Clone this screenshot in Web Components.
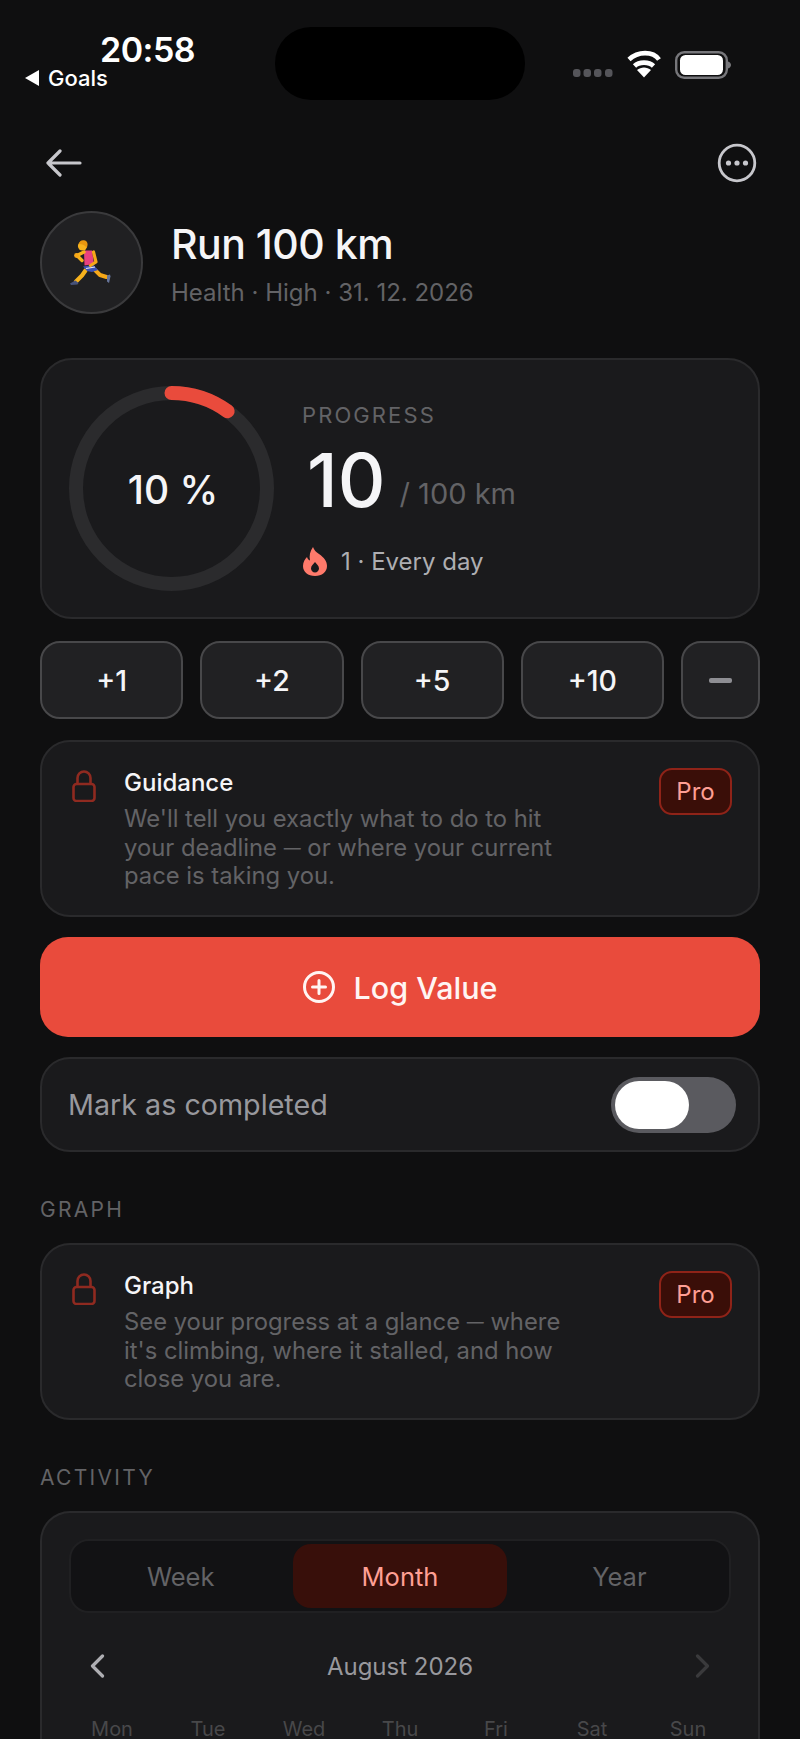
<!DOCTYPE html>
<html lang="en">
<head>
<meta charset="utf-8">
<title>Run 100 km</title>
<style>
html, body {
  margin: 0;
  padding: 0;
  width: 800px;
  height: 1739px;
  overflow: hidden;
  background: #0f0f10;
  color: #fff;
  font-family: Inter, "Liberation Sans", sans-serif;
}
main {
  display: flex;
  flex-direction: column;
  padding: 0 40px;
}
</style>
</head>
<body>
<status-bar></status-bar>
<main>
  <goal-header title="Run 100 km" meta="Health · High · 31. 12. 2026"></goal-header>
  <progress-card percent="10" value="10" target="/ 100 km" streak="1 · Every day"></progress-card>
  <quick-buttons></quick-buttons>
  <locked-card heading="Guidance">We'll tell you exactly what to do to hit<br>your deadline <span class="dash">—</span> or where your current<br>pace is taking you.</locked-card>
  <log-button>Log Value</log-button>
  <toggle-row>Mark as completed</toggle-row>
  <section-label style="margin-top:45px;margin-bottom:20px">GRAPH</section-label>
  <locked-card heading="Graph">See your progress at a glance <span class="dash">—</span> where<br>it's climbing, where it stalled, and how<br>close you are.</locked-card>
  <section-label style="margin-top:45px;margin-bottom:20px">ACTIVITY</section-label>
  <activity-card month="August 2026"></activity-card>
</main>

<script>
const statusTemplate = document.createElement('template');
statusTemplate.innerHTML = `
<style>
:host { display: grid; grid-template-columns: 275px 250px 1fr; height: 120px; color: #fff; }
.left { padding-top: 32px; }
.time { margin-left: 100px; font-size: 34px; line-height: 36px; font-weight: 600; letter-spacing: -0.5px; }
.back { display: flex; align-items: center; gap: 9px; margin-left: 25px; font-size: 22px; line-height: 20px; font-weight: 500; }
.island { margin-top: 27px; height: 73px; border-radius: 36px; background: #000; }
.icons { margin: 5px 0 0 48px; padding-top: 40px; }
svg { display: block; }
</style>
<div class="left">
  <div class="time">20:58</div>
  <div class="back">
    <svg width="14" height="16" viewBox="0 0 14 16"><path d="M14 0v16L0 8z" fill="#fff"/></svg>
    <span>Goals</span>
  </div>
</div>
<div class="island"></div>
<div class="icons">
  <svg width="160" height="40" viewBox="0 0 160 40">
    <g fill="#55555a">
      <rect x="0" y="24" width="7.5" height="8" rx="3"/>
      <rect x="10.5" y="24" width="7.5" height="8" rx="3"/>
      <rect x="21" y="24" width="7.5" height="8" rx="3"/>
      <rect x="32" y="24" width="7.5" height="8" rx="3"/>
    </g>
    <g fill="none" stroke="#fff" stroke-width="4.6">
      <path d="M56 14.5C65 6 80 6 86 14.5"/>
      <path d="M61.5 21C66 16.5 76 16.5 80.5 21"/>
    </g>
    <path d="M71 32.5l-7-7.5c4-3.4 10-3.4 14 0z" fill="#fff"/>
    <rect x="103.2" y="7.2" width="50.6" height="25.6" rx="8" fill="none" stroke="#77777b" stroke-width="2.4"/>
    <rect x="107" y="10" width="43" height="20" rx="5.5" fill="#fff"/>
    <path d="M155 16.5c2 .6 3 2 3 3.5s-1 2.9-3 3.5z" fill="#77777b"/>
  </svg>
</div>`;

class StatusBar extends HTMLElement {
  constructor() {
    super();
    this.attachShadow({ mode: 'open' });
    this.shadowRoot.appendChild(statusTemplate.content.cloneNode(true));
  }
}
customElements.define('status-bar', StatusBar);

const headerTemplate = document.createElement('template');
headerTemplate.innerHTML = `
<style>
:host { display: block; }
.nav { display: flex; justify-content: space-between; align-items: center; height: 86px; padding: 0 3px 0 6px; }
svg { display: block; }
.goal { display: flex; align-items: center; gap: 28px; margin-top: 5px; }
.avatar { box-sizing: border-box; width: 103px; height: 103px; border-radius: 50%; background: #202022; border: 2px solid #3a3a3c; display: flex; align-items: center; justify-content: center; }
.names { padding-top: 4px; }
h1 { margin: 0; font-size: 41px; line-height: 48px; font-weight: 500; letter-spacing: -0.5px; color: #f5f5f7; }
p { margin: 9px 0 0; font-size: 24px; line-height: 32px; color: #636366; }
</style>
<div class="nav">
  <svg width="36" height="28" viewBox="0 0 36 28" fill="none" stroke="#c7c7cc" stroke-width="3.2" stroke-linecap="round" stroke-linejoin="round">
    <path d="M34 14H2M14 2L2 14l12 12"/>
  </svg>
  <svg width="40" height="40" viewBox="0 0 40 40">
    <circle cx="20" cy="20" r="17.8" fill="none" stroke="#c7c7cc" stroke-width="2.8"/>
    <circle cx="11.5" cy="20" r="2.6" fill="#c7c7cc"/>
    <circle cx="20" cy="20" r="2.6" fill="#c7c7cc"/>
    <circle cx="28.5" cy="20" r="2.6" fill="#c7c7cc"/>
  </svg>
</div>
<div class="goal">
  <div class="avatar">
    <svg width="44" height="46" viewBox="0 0 44 46">
      <path d="M15.5 30.5L12 35.500l-6 6" fill="none" stroke="#f7b21d" stroke-width="4.2" stroke-linecap="round" stroke-linejoin="round"/>
      <path d="M25 30l5 5 6.500 2" fill="none" stroke="#f7a818" stroke-width="4" stroke-linecap="round" stroke-linejoin="round"/>
      <path d="M0 43.500L5.500 40.500l3 2.500-1 1.500-6.500 .5z" fill="#46527a"/>
      <path d="M37 35.500l3-1 .5 2-1.500 6.500-2-1.500z" fill="#66749a"/>
      <path d="M13 26.500l10.500-1.500 4.500 5-6 2-5-1z" fill="#3b51b5"/>
      <path d="M16 28.500l9-1.500" stroke="#e8e8f0" stroke-width="1.200"/>
      <path d="M14 10.500l8 0 2 13.500-9.500 1.500z" fill="#e8417f"/>
      <path d="M14 12l-7 3.500 5 5" fill="none" stroke="#f7b21d" stroke-width="3.400" stroke-linecap="round" stroke-linejoin="round"/>
      <circle cx="6.500" cy="15.500" r="2.400" fill="#f7a818"/>
      <path d="M23.500 12l2.500 10-5.500 3.500" fill="none" stroke="#f7a818" stroke-width="3.200" stroke-linecap="round" stroke-linejoin="round"/>
      <circle cx="12.500" cy="6" r="4.600" fill="#f7b21d"/>
      <path d="M9 4c0-3 3-4.500 6-3.500 2.500 1 3.500 4 1.500 7.500-1-2.500-4-4-7.500-4z" fill="#e8960f"/>
    </svg>
  </div>
  <div class="names">
    <h1></h1>
    <p></p>
  </div>
</div>`;

class GoalHeader extends HTMLElement {
  constructor() {
    super();
    this.attachShadow({ mode: 'open' });
    this.shadowRoot.appendChild(headerTemplate.content.cloneNode(true));
  }

  connectedCallback() {
    this.shadowRoot.querySelector('h1').textContent = this.getAttribute('title');
    this.shadowRoot.querySelector('p').textContent = this.getAttribute('meta');
  }
}
customElements.define('goal-header', GoalHeader);

const progressTemplate = document.createElement('template');
progressTemplate.innerHTML = `
<style>
:host { display: flex; box-sizing: border-box; height: 261px; margin-top: 44px; padding: 26px; gap: 28px; align-items: center; background: #1a1a1c; border: 2px solid #2a2a2c; border-radius: 32px; }
.ring { position: relative; width: 205px; height: 205px; flex: none; margin-left: 1px; }
svg { display: block; }
.pct { position: absolute; inset: 0; display: flex; align-items: center; justify-content: center; padding: 2px 0 0 3px; font-size: 39px; font-weight: 500; color: #f5f5f7; }
.info { margin-top: 2px; }
.label { font-size: 22px; line-height: 26px; letter-spacing: 2.1px; color: #636366; }
.amount { height: 82px; margin: 11px 0 0 5px; white-space: nowrap; }
.value { font-size: 74px; line-height: 82px; font-weight: 500; color: #f5f5f7; }
.target { margin-left: 14px; font-size: 29px; color: #636366; vertical-align: 3px; }
.streak { display: flex; align-items: center; gap: 14px; margin: 25px 0 0 1px; font-size: 24px; line-height: 32px; color: #aeaeb2; }
</style>
<div class="ring">
  <svg width="205" height="205" viewBox="0 0 205 205">
    <circle cx="102.500" cy="102.500" r="95.500" fill="none" stroke="#2b2b2d" stroke-width="14"/>
    <path class="arc" fill="none" stroke="#e94b3c" stroke-width="14" stroke-linecap="round"/>
  </svg>
  <div class="pct"></div>
</div>
<div class="info">
  <div class="label">PROGRESS</div>
  <div class="amount"><span class="value"></span><span class="target"></span></div>
  <div class="streak">
    <svg width="24" height="29" viewBox="0 0 24 29">
      <path fill-rule="evenodd" fill="#ff7a6b" d="M10 0c1 3 3 5 6 7 5 3.500 8 7 8 12 0 6-5 10-12 10S0 25 0 19c0-4 2-7 4-9 .5 2 1.500 3 3 3.500C6 9 7 4 10 0zm2 15c-1.500 2-4 3.500-4 6.500 0 2.300 1.800 4 4 4s4-1.700 4-4c0-3-2.500-4.500-4-6.500z"/>
    </svg>
    <span class="streak-text"></span>
  </div>
</div>`;

class ProgressCard extends HTMLElement {
  constructor() {
    super();
    this.attachShadow({ mode: 'open' });
    this.shadowRoot.appendChild(progressTemplate.content.cloneNode(true));
  }

  connectedCallback() {
    const percent = Number(this.getAttribute('percent'));
    const root = this.shadowRoot;
    const angle = (percent / 100) * 2 * Math.PI;
    const x = 102.5 + 95.5 * Math.sin(angle);
    const y = 102.5 - 95.5 * Math.cos(angle);
    root.querySelector('.arc').setAttribute('d', `M102.5 7A95.5 95.5 0 0 1 ${x} ${y}`);
    root.querySelector('.pct').textContent = `${percent} %`;
    root.querySelector('.value').textContent = this.getAttribute('value');
    root.querySelector('.target').textContent = this.getAttribute('target');
    root.querySelector('.streak-text').textContent = this.getAttribute('streak');
  }
}
customElements.define('progress-card', ProgressCard);

const quickTemplate = document.createElement('template');
quickTemplate.innerHTML = `
<style>
:host { display: grid; grid-template-columns: repeat(4, 1fr) 79px; gap: 17px; margin-top: 22px; height: 78px; }
div { display: flex; align-items: center; justify-content: center; background: #212123; border: 2px solid #48484a; border-radius: 20px; font-size: 28.500px; font-weight: 500; color: #f5f5f7; }
i { display: block; width: 23px; height: 5px; border-radius: 2px; background: #8e8e93; }
</style>
<div>+1</div><div>+2</div><div>+5</div><div>+10</div><div><i></i></div>`;

class QuickButtons extends HTMLElement {
  constructor() {
    super();
    this.attachShadow({ mode: 'open' });
    this.shadowRoot.appendChild(quickTemplate.content.cloneNode(true));
  }
}
customElements.define('quick-buttons', QuickButtons);

const lockedTemplate = document.createElement('template');
lockedTemplate.innerHTML = `
<style>
:host { display: flex; box-sizing: border-box; height: 177px; padding: 26px 26px 0 30px; background: #1a1a1c; border: 2px solid #2a2a2c; border-radius: 30px; align-items: flex-start; }
svg { display: block; flex: none; margin-top: 2px; }
.text { flex: 1; margin-left: 28px; }
h2 { margin: 0; font-size: 24px; line-height: 30px; font-weight: 500; color: #f5f5f7; }
p { margin: 7px 0 0; font-size: 23.800px; line-height: 28.500px; color: #636366; }
::slotted(.dash) { font-size: 17px; line-height: 1; vertical-align: 2px; }
.pro { flex: none; margin-top: 0; box-sizing: border-box; width: 73px; height: 47px; display: flex; align-items: center; justify-content: center; background: #3a0e08; border: 2px solid #8f2318; border-radius: 13px; font-size: 24px; color: #ff9f94; }
</style>
<svg width="24" height="32" viewBox="0 0 24 32" fill="none" stroke="#8f2a20" stroke-width="2.600">
  <rect x="1.500" y="14" width="21" height="17" rx="3"/>
  <path d="M5.500 14V8a6.500 6.500 0 0 1 13 0v6"/>
</svg>
<div class="text">
  <h2></h2>
  <p><slot></slot></p>
</div>
<div class="pro">Pro</div>`;

class LockedCard extends HTMLElement {
  constructor() {
    super();
    this.attachShadow({ mode: 'open' });
    this.shadowRoot.appendChild(lockedTemplate.content.cloneNode(true));
  }

  connectedCallback() {
    this.shadowRoot.querySelector('h2').textContent = this.getAttribute('heading');
    if (this.previousElementSibling.localName === 'quick-buttons') {
      this.style.marginTop = '21px';
    }
  }
}
customElements.define('locked-card', LockedCard);

const logTemplate = document.createElement('template');
logTemplate.innerHTML = `
<style>
:host { display: flex; align-items: center; justify-content: center; gap: 19px; height: 100px; margin-top: 20px; background: #e94b3c; border-radius: 28px; font-size: 30.500px; font-weight: 500; color: #fff5f3; }
svg { display: block; }
</style>
<svg width="32" height="32" viewBox="0 0 32 32" fill="none" stroke="#fff5f3" stroke-width="3">
  <circle cx="16" cy="16" r="14.500"/>
  <path d="M16 9.500v13M9.500 16h13" stroke-linecap="round"/>
</svg>
<span><slot></slot></span>`;

class LogButton extends HTMLElement {
  constructor() {
    super();
    this.attachShadow({ mode: 'open' });
    this.shadowRoot.appendChild(logTemplate.content.cloneNode(true));
  }
}
customElements.define('log-button', LogButton);

const toggleTemplate = document.createElement('template');
toggleTemplate.innerHTML = `
<style>
:host { display: flex; box-sizing: border-box; align-items: center; justify-content: space-between; height: 95px; margin-top: 20px; padding: 0 22px 0 26px; background: #1a1a1c; border: 2px solid #2a2a2c; border-radius: 30px; font-size: 28.700px; color: #98989d; }
.track { box-sizing: border-box; width: 125px; height: 56px; padding: 4px; border-radius: 28px; background: #5a5a5f; }
.thumb { width: 74px; height: 48px; border-radius: 24px; background: #fff; }
</style>
<span><slot></slot></span>
<div class="track"><div class="thumb"></div></div>`;

class ToggleRow extends HTMLElement {
  constructor() {
    super();
    this.attachShadow({ mode: 'open' });
    this.shadowRoot.appendChild(toggleTemplate.content.cloneNode(true));
  }
}
customElements.define('toggle-row', ToggleRow);

const labelTemplate = document.createElement('template');
labelTemplate.innerHTML = `
<style>
:host { display: block; margin-bottom: 21px; font-size: 21px; line-height: 26px; letter-spacing: 2.300px; color: #636366; }
</style>
<slot></slot>`;

class SectionLabel extends HTMLElement {
  constructor() {
    super();
    this.attachShadow({ mode: 'open' });
    this.shadowRoot.appendChild(labelTemplate.content.cloneNode(true));
  }
}
customElements.define('section-label', SectionLabel);

const activityTemplate = document.createElement('template');
activityTemplate.innerHTML = `
<style>
:host { display: block; box-sizing: border-box; height: 300px; padding: 26px 22px 0; background: #1a1a1c; border: 2px solid #2a2a2c; border-bottom: 0; border-radius: 30px 30px 0 0; }
.segments { display: grid; grid-template-columns: repeat(3, 1fr); gap: 6px; box-sizing: border-box; height: 74px; margin: 0 5px; padding: 3px; background: #121214; border: 2px solid #202022; border-radius: 20px; }
.segments div { display: flex; align-items: center; justify-content: center; border-radius: 18px; font-size: 25.500px; color: #636366; }
.segments .on { background: #380f0a; color: #ff9f94; }
.month { display: flex; align-items: center; justify-content: space-between; height: 40px; margin-top: 33px; padding: 0 26px; font-size: 24px; color: #98989d; }
svg { display: block; }
.days { display: grid; grid-template-columns: repeat(7, 1fr); margin-top: 28px; font-size: 20px; line-height: 30px; text-align: center; color: #48484a; }
</style>
<div class="segments">
  <div>Week</div>
  <div class="on">Month</div>
  <div>Year</div>
</div>
<div class="month">
  <svg width="15" height="24" viewBox="0 0 15 24" fill="none" stroke="#aeaeb2" stroke-width="3.200" stroke-linecap="round" stroke-linejoin="round"><path d="M12.500 2L2.500 12l10 10"/></svg>
  <span class="month-name"></span>
  <svg width="15" height="24" viewBox="0 0 15 24" fill="none" stroke="#3a3a3c" stroke-width="3.200" stroke-linecap="round" stroke-linejoin="round"><path d="M2.500 2l10 10-10 10"/></svg>
</div>
<div class="days">
  <span>Mon</span><span>Tue</span><span>Wed</span><span>Thu</span><span>Fri</span><span>Sat</span><span>Sun</span>
</div>`;

class ActivityCard extends HTMLElement {
  constructor() {
    super();
    this.attachShadow({ mode: 'open' });
    this.shadowRoot.appendChild(activityTemplate.content.cloneNode(true));
  }

  connectedCallback() {
    this.shadowRoot.querySelector('.month-name').textContent = this.getAttribute('month');
  }
}
customElements.define('activity-card', ActivityCard);
</script>
</body>
</html>
